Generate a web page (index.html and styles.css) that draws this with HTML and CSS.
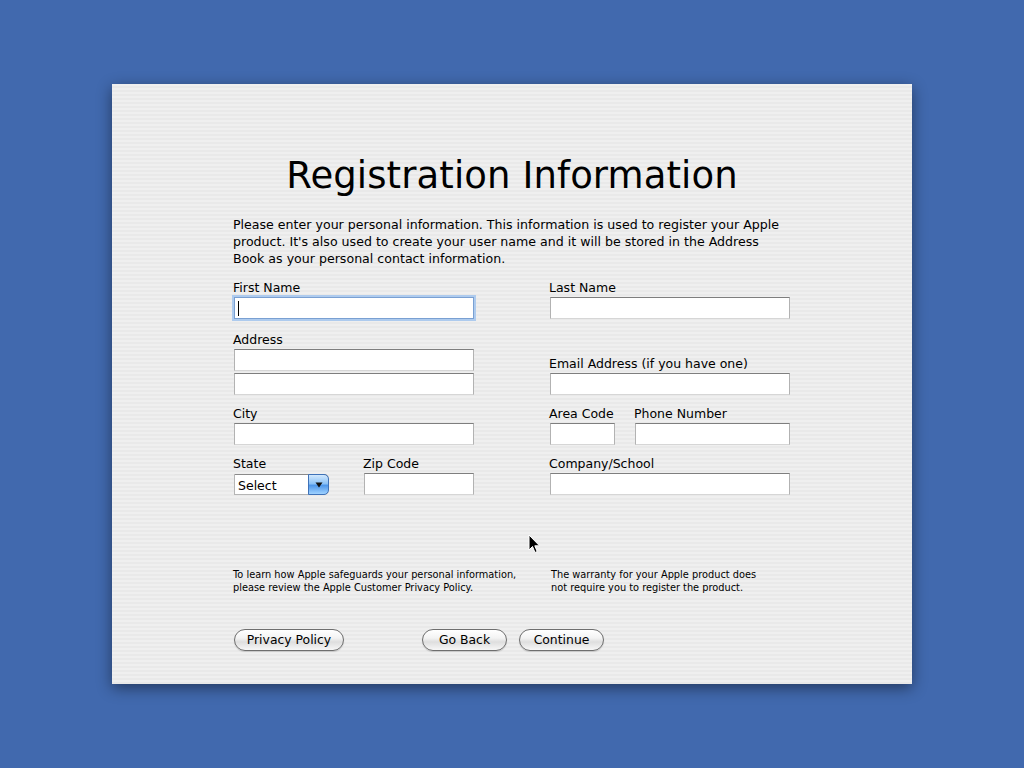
FILE: index.html
```html
<!DOCTYPE html>
<html lang="en">
<head>
<meta charset="utf-8">
<title>Registration Information</title>
<link rel="stylesheet" href="styles.css">
</head>
<body>
<div class="panel">
  <h1 class="title">Registration Information</h1>
  <p class="intro">Please enter your personal information. This information is used to register your Apple<br>product. It's also used to create your user name and it will be stored in the Address<br>Book as your personal contact information.</p>
  <div class="form">
    <div class="col col-left">
      <div class="field">
        <label class="label">First Name</label>
        <div class="input wide focused"><span class="caret"></span></div>
      </div>
      <div class="field gap-s">
        <label class="label">Address</label>
        <div class="input wide"></div>
        <div class="input wide second"></div>
      </div>
      <div class="field gap-t">
        <label class="label">City</label>
        <div class="input wide"></div>
      </div>
      <div class="row gap-t">
        <div class="field state">
          <label class="label">State</label>
          <div class="select"><span class="select-text">Select</span><span class="select-btn"><svg width="8" height="6" viewBox="0 0 8 6"><path d="M0.5 0.5 L7.5 0.5 L4 5.5 Z" fill="#111"/></svg></span></div>
        </div>
        <div class="field zip">
          <label class="label">Zip Code</label>
          <div class="input zipin"></div>
        </div>
      </div>
    </div>
    <div class="col col-right">
      <div class="field">
        <label class="label">Last Name</label>
        <div class="input wide"></div>
      </div>
      <div class="field gap-l">
        <label class="label">Email Address (if you have one)</label>
        <div class="input wide"></div>
      </div>
      <div class="row gap-t">
        <div class="field area">
          <label class="label">Area Code</label>
          <div class="input areain"></div>
        </div>
        <div class="field phone">
          <label class="label">Phone Number</label>
          <div class="input phonein"></div>
        </div>
      </div>
      <div class="field gap-t">
        <label class="label">Company/School</label>
        <div class="input wide"></div>
      </div>
    </div>
  </div>
  <div class="notes">
    <p class="note note-left">To learn how Apple safeguards your personal information,<br>please review the Apple Customer Privacy Policy.</p>
    <p class="note note-right">The warranty for your Apple product does<br>not require you to register the product.</p>
  </div>
  <div class="buttons">
    <button class="btn btn-privacy">Privacy Policy</button>
    <div class="nav">
      <button class="btn btn-nav">Go Back</button>
      <button class="btn btn-nav">Continue</button>
    </div>
  </div>
</div>
<svg class="cursor" width="13" height="20" viewBox="0 0 13 20"><path d="M1 1 L1 16 L4.5 12.5 L7 18.5 L9.2 17.5 L6.8 11.8 L11.5 11.8 Z" fill="#000" stroke="#fff" stroke-width="1"/></svg>
</body>
</html>
```

FILE: styles.css
```css
html, body {
  margin: 0;
  padding: 0;
}
body {
  width: 1024px;
  height: 768px;
  background: #4169ae;
  display: flex;
  align-items: center;
  justify-content: center;
  font-family: "DejaVu Sans", "Liberation Sans", sans-serif;
  color: #000;
  position: relative;
  overflow: hidden;
}
.panel {
  width: 800px;
  height: 600px;
  box-sizing: border-box;
  padding: 70px 0 0 121px;
  background: repeating-linear-gradient(to bottom, #efefef 0, #efefef 2px, #e9e9e9 2px, #e9e9e9 4px);
  box-shadow: 0 4px 14px rgba(0, 0, 0, 0.45);
}
.title {
  margin: 0 0 0 -121px;
  width: 800px;
  text-align: center;
  font-weight: normal;
  font-size: 37px;
  line-height: 44px;
  letter-spacing: 0.1px;
}
.intro {
  margin: 18px 0 0 0;
  font-size: 12.6px;
  line-height: 17px;
  white-space: nowrap;
}
.form {
  display: flex;
  margin-top: 11px;
}
.col {
  display: flex;
  flex-direction: column;
}
.col-left {
  width: 316px;
}
.col-right {
  width: 242px;
}
.field {
  display: flex;
  flex-direction: column;
}
.label {
  font-size: 12.5px;
  line-height: 16px;
  height: 16px;
  padding-top: 2px;
  margin-bottom: 1px;
  white-space: nowrap;
}
.gap-s { margin-top: 11px; }
.gap-t { margin-top: 9px; }
.gap-l { margin-top: 35px; }
.row {
  display: flex;
}
.input {
  height: 22px;
  box-sizing: border-box;
  margin-left: 1px;
  background: #fff;
  border-top: 1px solid #7e7e7e;
  border-left: 1px solid #b2b2b2;
  border-right: 1px solid #b2b2b2;
  border-bottom: 1px solid #d6d6d6;
  position: relative;
}
.wide { width: 240px; }
.second { margin-top: 2px; }
.focused {
  border: 1px solid #7aa0d2;
  box-shadow: 0 0 0 2px #aecbee;
}
.caret {
  position: absolute;
  left: 3px;
  top: 3px;
  width: 1px;
  height: 15px;
  background: #000;
}
.state { width: 130px; }
.zip { width: 111px; }
.zipin { width: 110px; }
.select {
  margin-left: 1px;
  margin-top: 1px;
  width: 95px;
  height: 21px;
  box-sizing: border-box;
  display: flex;
  background: #fff;
  border: 1px solid #b5b5b5;
  border-top-color: #8a8a8a;
  border-right: none;
  border-radius: 0 5px 5px 0;
}
.select-text {
  flex: 1;
  font-size: 12.5px;
  line-height: 19px;
  padding-top: 1px;
  padding-left: 3px;
}
.select-btn {
  width: 19px;
  margin-top: -1px;
  margin-bottom: -1px;
  border-radius: 0 5px 5px 0;
  border: 1px solid #3f72b8;
  background: linear-gradient(to bottom, #d2e8fd 0%, #8cc2f6 45%, #4f97ea 55%, #9fd2ff 100%);
  display: flex;
  align-items: center;
  justify-content: center;
}
.area { width: 85px; }
.areain { width: 65px; }
.phone { width: 157px; }
.phonein { width: 155px; }
.notes {
  display: flex;
  margin-top: 73px;
}
.note {
  margin: 0;
  font-size: 9.8px;
  line-height: 13px;
  white-space: nowrap;
}
.note-left { width: 318px; }
.buttons {
  display: flex;
  margin-top: 35px;
  margin-left: 1px;
}
.nav {
  display: flex;
  gap: 12px;
  margin-left: 78px;
}
.btn {
  height: 22px;
  box-sizing: border-box;
  padding: 0;
  border: 1px solid #6e6e6e;
  border-radius: 11px;
  background: linear-gradient(to bottom, #ffffff 0%, #f3f3f3 40%, #dedede 60%, #f7f7f7 100%);
  font-family: "DejaVu Sans", "Liberation Sans", sans-serif;
  font-size: 12.4px;
  line-height: 20px;
  color: #000;
  box-shadow: 0 1px 1px rgba(0, 0, 0, 0.15);
}
.btn-privacy { width: 110px; }
.btn-nav { width: 85px; }
.cursor {
  position: absolute;
  left: 528px;
  top: 534px;
}
```
